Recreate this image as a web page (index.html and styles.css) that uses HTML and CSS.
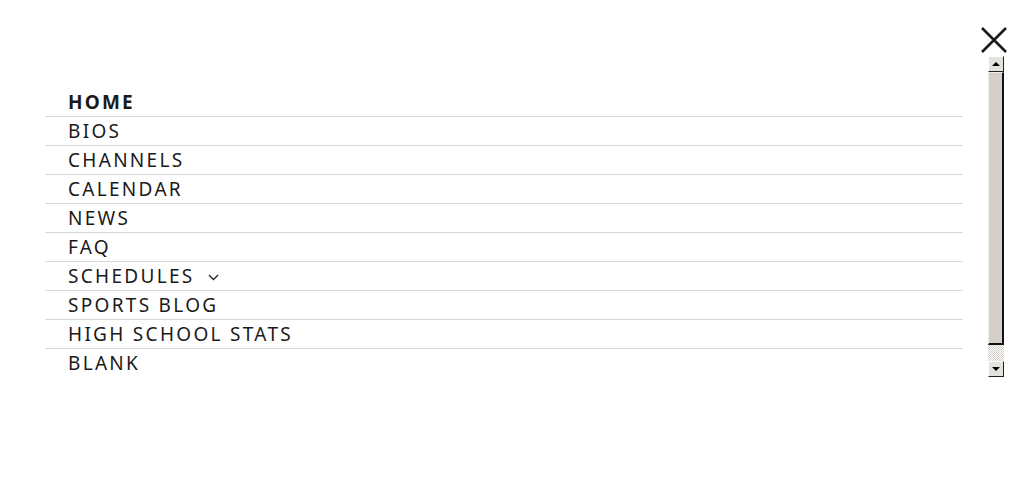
FILE: index.html
```html
<!DOCTYPE html>
<html lang="en">
<head>
    <meta charset="UTF-8">
    <title>Menu</title>
    <link rel="stylesheet" href="styles.css">
</head>
<body>
    <button class="close" aria-label="Close">
        <svg width="28" height="28" viewBox="0 0 28 28"><path d="M2 2 L26 26 M26 2 L2 26" stroke="#1a1a1a" stroke-width="2.6" fill="none"/></svg>
    </button>
    <div class="panel">
        <ul class="menu">
            <li class="active"><a href="#">HOME</a></li>
            <li><a href="#">BIOS</a></li>
            <li><a href="#">CHANNELS</a></li>
            <li><a href="#">CALENDAR</a></li>
            <li><a href="#">NEWS</a></li>
            <li><a href="#">FAQ</a></li>
            <li><a href="#">SCHEDULES <span class="caret"><svg width="11" height="7" viewBox="0 0 11 7"><path d="M1 1 L5.5 5.5 L10 1" stroke="#222" stroke-width="1.3" fill="none"/></svg></span></a></li>
            <li><a href="#">SPORTS BLOG</a></li>
            <li><a href="#">HIGH SCHOOL STATS</a></li>
            <li><a href="#">BLANK</a></li>
        </ul>
        <div class="scrollbar">
            <div class="sb-btn"><span class="arrow-up"></span></div>
            <div class="sb-thumb"></div>
            <div class="sb-track"></div>
            <div class="sb-btn"><span class="arrow-down"></span></div>
        </div>
    </div>
</body>
</html>
```

FILE: styles.css
```css
body {
    margin: 0;
    background: #fff;
    font-family: "Noto Sans", "Open Sans", sans-serif;
    color: #1a1a1a;
}
.close {
    position: absolute;
    top: 26px;
    right: 16px;
    padding: 0;
    border: none;
    background: none;
    cursor: pointer;
}
.close svg {
    display: block;
}
.panel {
    display: flex;
    align-items: flex-start;
    padding-top: 56px;
}
.menu {
    list-style: none;
    margin: 32px 0 0 45px;
    padding: 0;
    width: 918px;
}
.menu li {
    border-bottom: 1px solid #d8d8d8;
    height: 28px;
}
.menu li:last-child {
    border-bottom: none;
}
.menu a {
    display: block;
    padding: 1px 0 0 23px;
    line-height: 27px;
    font-size: 19px;
    letter-spacing: 2.3px;
    color: #1a1a1a;
    text-decoration: none;
}
.menu li.active a {
    font-weight: 700;
    letter-spacing: 2.2px;
}
.caret {
    display: inline-block;
    margin-left: 6px;
    vertical-align: 2px;
}
.caret svg {
    display: block;
}
.scrollbar {
    margin-left: 25px;
    width: 16px;
    display: flex;
    flex-direction: column;
}
.sb-btn {
    height: 16px;
    box-sizing: border-box;
    background: #e4e2dc;
    border-top: 1px solid #fff;
    border-left: 1px solid #fff;
    border-right: 1px solid #222;
    border-bottom: 1px solid #222;
    display: flex;
    align-items: center;
    justify-content: center;
}
.arrow-up {
    width: 0;
    height: 0;
    border-left: 4px solid transparent;
    border-right: 4px solid transparent;
    border-bottom: 4px solid #000;
}
.arrow-down {
    width: 0;
    height: 0;
    border-left: 4px solid transparent;
    border-right: 4px solid transparent;
    border-top: 4px solid #000;
}
.sb-thumb {
    height: 273px;
    box-sizing: border-box;
    background: #d4d0c8;
    border-top: 1px solid #f0eee8;
    border-left: 1px solid #f0eee8;
    border-right: 2px solid #111;
    border-bottom: 2px solid #111;
}
.sb-track {
    height: 16px;
    background-color: #fff;
    background-image: repeating-conic-gradient(#d4d0c8 0 25%, #fff 0 50%);
    background-size: 2px 2px;
}
```
